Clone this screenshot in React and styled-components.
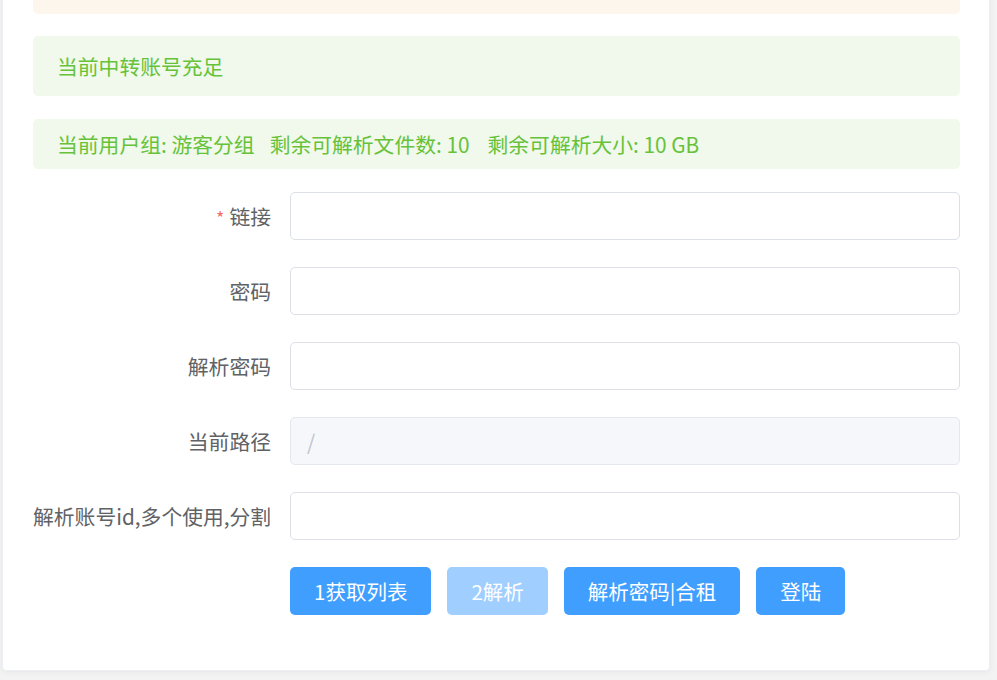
import React from "react";
import styled, { createGlobalStyle } from "styled-components";

const GlobalStyle = createGlobalStyle`
  html, body {
    margin: 0;
    padding: 0;
    background: #f3f3f3;
    font-family: "Noto Sans CJK SC", "Noto Sans", sans-serif;
  }
  * { box-sizing: border-box; }
`;

const Page = styled.div`
  padding: 0 7px 9px 2px;
`;

const Card = styled.div`
  margin-top: -77px;
  background: #fff;
  border: 1px solid #ebeef5;
  border-radius: 4px;
  box-shadow: 0 1px 6px rgba(0, 0, 0, 0.06);
  padding: 30px 29px 28px 30px;
`;

const Alert = styled.div`
  display: flex;
  align-items: center;
  height: ${(p) => p.$h}px;
  border-radius: 5px;
  padding: 0 24px;
  font-size: 20.8px;
  line-height: 24px;
  white-space: pre;
  color: ${(p) => (p.$type === "warning" ? "#e6a23c" : "#67c23a")};
  background: ${(p) => (p.$type === "warning" ? "#fdf6ec" : "#f0f9eb")};
  margin-bottom: ${(p) => p.$mb}px;
`;

const Gap = styled.span`
  display: inline-block;
  width: ${(p) => p.$w}px;
`;

const FormItem = styled.div`
  display: flex;
  align-items: center;
  height: 48px;
  margin-bottom: 27px;
`;

const Label = styled.label`
  flex: 0 0 257px;
  padding-right: 19px;
  text-align: right;
  font-size: 20.8px;
  line-height: 48px;
  height: 48px;
  color: #606266;
  white-space: nowrap;
`;

const Star = styled.span`
  color: #f56c6c;
  margin-right: 5px;
  font-size: 18px;
`;

const Input = styled.input`
  flex: 1;
  height: 48px;
  border: 1px solid ${(p) => (p.disabled ? "#e4e7ed" : "#dcdfe6")};
  background: ${(p) => (p.disabled ? "#f5f7fa" : "#fff")};
  color: ${(p) => (p.disabled ? "#c0c4cc" : "#606266")};
  border-radius: 5px;
  padding: 0 16px;
  font-family: inherit;
  font-size: 20.8px;
  outline: none;
`;

const Buttons = styled.div`
  display: flex;
  gap: 16px;
`;

const Button = styled.button`
  height: 48px;
  padding: 0 24px;
  border: none;
  border-radius: 5px;
  background: ${(p) => (p.disabled ? "#a0cfff" : "#409eff")};
  color: #fff;
  font-family: inherit;
  font-size: 20.5px;
  cursor: ${(p) => (p.disabled ? "not-allowed" : "pointer")};
`;

export default function App() {
  return (
    <>
      <GlobalStyle />
      <Page>
        <Card>
          <Alert $type="warning" $h={60} $mb={22} />
          <Alert $h={60} $mb={23}>当前中转账号充足</Alert>
          <Alert $h={50} $mb={23}>
            当前用户组: 游客分组<Gap $w={15} />剩余可解析文件数: 10<Gap $w={18} />剩余可解析大小: 10 GB
          </Alert>
          <FormItem>
            <Label><Star>*</Star>链接</Label>
            <Input />
          </FormItem>
          <FormItem>
            <Label>密码</Label>
            <Input />
          </FormItem>
          <FormItem>
            <Label>解析密码</Label>
            <Input />
          </FormItem>
          <FormItem>
            <Label>当前路径</Label>
            <Input disabled value="/" readOnly />
          </FormItem>
          <FormItem>
            <Label>解析账号id,多个使用,分割</Label>
            <Input />
          </FormItem>
          <FormItem>
            <Label />
            <Buttons>
              <Button>1获取列表</Button>
              <Button disabled>2解析</Button>
              <Button>解析密码|合租</Button>
              <Button>登陆</Button>
            </Buttons>
          </FormItem>
        </Card>
      </Page>
    </>
  );
}
